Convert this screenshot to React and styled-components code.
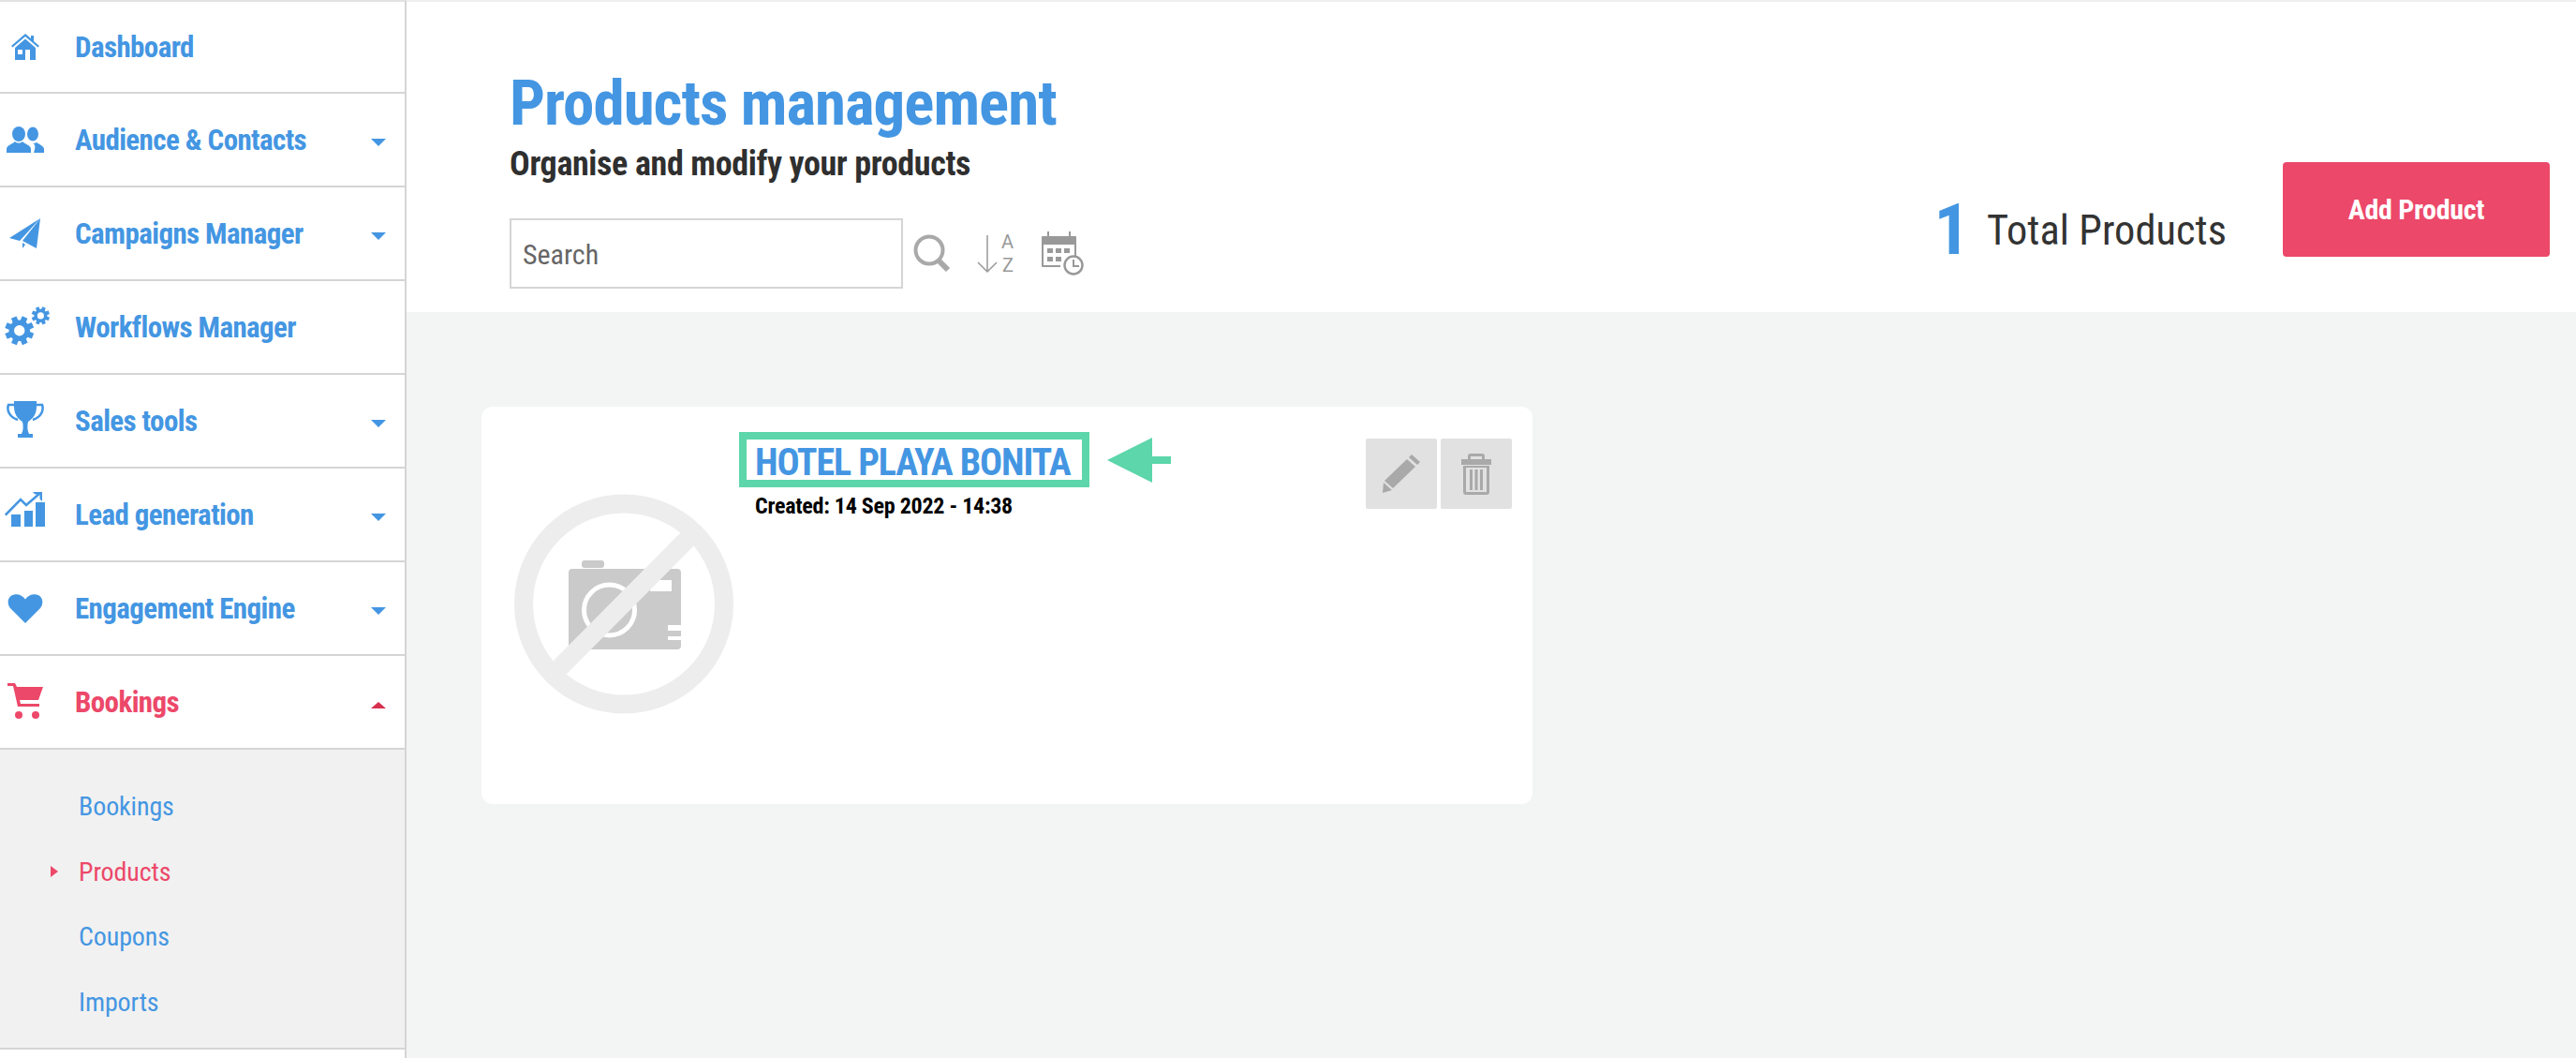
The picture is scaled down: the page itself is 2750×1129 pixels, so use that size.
import React from "react";
import styled, { createGlobalStyle } from "styled-components";

const BLUE = "#4496e2";
const RED = "#ec4869";
const GREEN = "#5cd6aa";

const GlobalStyle = createGlobalStyle`
  html, body {
    margin: 0;
    padding: 0;
    background: #f3f4f4;
  }
  body {
    font-family: "Roboto", "Liberation Sans", sans-serif;
    font-stretch: 75%;
  }
  * {
    box-sizing: border-box;
  }
`;

const Page = styled.div`
  display: flex;
  width: 2750px;
  height: 1129px;
  overflow: hidden;
`;

const Sidebar = styled.nav`
  width: 434px;
  flex-shrink: 0;
  background: #fff;
  border-right: 2px solid #d5d5d5;
  border-top: 2px solid #e2e2e2;
`;

const MenuRow = styled.div`
  display: flex;
  align-items: center;
  height: ${(p) => (p.$first ? "98px" : "100px")};
  border-bottom: 2px solid #d5d5d5;
  color: ${(p) => (p.$active ? RED : BLUE)};
`;

const IconSlot = styled.span`
  width: 80px;
  flex-shrink: 0;
  display: flex;
  justify-content: center;
  padding-right: 26px;
  margin-bottom: ${(p) => p.$lift || 0}px;
`;

const MenuLabel = styled.span`
  flex: 1;
  font-size: 31px;
  font-weight: 700;
  letter-spacing: -0.6px;
  white-space: nowrap;
`;

const Caret = styled.span`
  width: 0;
  height: 0;
  margin: 6px 20px 0 0;
  border-left: 8px solid transparent;
  border-right: 8px solid transparent;
  border-top: ${(p) => (p.$up ? "0" : `8px solid ${BLUE}`)};
  border-bottom: ${(p) => (p.$up ? "7px solid #d8304f" : "0")};
`;

const SubMenu = styled.div`
  height: 320px;
  padding: 26px 0 0 84px;
  background: #f1f1f1;
  border-bottom: 2px solid #d5d5d5;
`;

const SubItem = styled.div`
  position: relative;
  height: 69.5px;
  line-height: 69.5px;
  font-size: 28px;
  letter-spacing: -0.1px;
  color: ${(p) => (p.$active ? RED : BLUE)};

  ${(p) =>
    p.$active &&
    `&::before {
      content: "";
      position: absolute;
      left: -30px;
      top: 28px;
      border-left: 8px solid ${RED};
      border-top: 6px solid transparent;
      border-bottom: 6px solid transparent;
    }`}
`;

const Main = styled.main`
  flex: 1;
  display: flex;
  flex-direction: column;
`;

const Header = styled.header`
  height: 333px;
  background: #fff;
  border-top: 2px solid #eeeeee;
  display: flex;
  justify-content: space-between;
  padding: 0 28px 0 110px;
`;

const HeaderLeft = styled.div`
  padding-top: 68px;
`;

const Title = styled.h1`
  margin: 0;
  font-size: 67px;
  line-height: 80px;
  font-weight: 700;
  letter-spacing: -1px;
  color: ${BLUE};
  white-space: nowrap;
`;

const Subtitle = styled.h2`
  margin: 3px 0 0;
  font-size: 36px;
  line-height: 44px;
  font-weight: 700;
  letter-spacing: -0.35px;
  color: #2f2f2f;
  white-space: nowrap;
`;

const SearchRow = styled.div`
  display: flex;
  align-items: center;
  margin-top: 36px;
`;

const SearchBox = styled.div`
  width: 420px;
  height: 75px;
  display: flex;
  align-items: center;
  padding: 2px 0 0 12px;
  border: 2px solid #d5d5d5;
  font-size: 30px;
  color: #666;
`;

const ToolIcon = styled.span`
  display: flex;
  margin-left: ${(p) => p.$gap}px;
`;

const HeaderRight = styled.div`
  display: flex;
  align-items: flex-start;
  padding-top: 171px;
`;

const Totals = styled.div`
  display: flex;
  align-items: center;
  height: 101px;
  margin-right: 60px;
  padding-top: 44px;
`;

const TotalNumber = styled.span`
  font-size: 76px;
  font-weight: 700;
  color: ${BLUE};
  margin: -2px 18px 0 0;
`;

const TotalLabel = styled.span`
  font-size: 44.5px;
  color: #333;
  white-space: nowrap;
`;

const AddButton = styled.button`
  width: 285px;
  height: 101px;
  border: 0;
  border-radius: 4px;
  background: ${RED};
  color: #fff;
  font: inherit;
  font-size: 30px;
  font-weight: 700;
  letter-spacing: -0.3px;
`;

const Content = styled.section`
  padding: 101px 0 0 80px;
`;

const Card = styled.article`
  width: 1122px;
  height: 424px;
  border-radius: 12px;
  background: #fff;
  display: flex;
  padding: 27px 22px 0 35px;
`;

const Thumb = styled.div`
  width: 240px;
  flex-shrink: 0;
  padding-top: 66px;
`;

const CardBody = styled.div`
  flex: 1;
`;

const TitleRow = styled.div`
  display: flex;
  align-items: center;
`;

const Highlight = styled.div`
  width: 374px;
  height: 59px;
  border: 8px solid ${GREEN};
  padding-left: 9px;
  font-size: 40px;
  line-height: 50px;
  font-weight: 700;
  letter-spacing: -1.1px;
  color: ${BLUE};
  white-space: nowrap;
`;

const Created = styled.div`
  margin: 5px 0 0 17px;
  font-size: 24px;
  line-height: 30px;
  font-weight: 700;
  letter-spacing: -0.25px;
  color: #000;
`;

const Actions = styled.div`
  display: flex;
  gap: 4px;
  flex-shrink: 0;
  margin-top: 7px;
`;

const ActionButton = styled.span`
  width: 76px;
  height: 75px;
  display: flex;
  align-items: center;
  justify-content: center;
  background: #e1e1e1;
  border-radius: 2px;
`;

const SvgLetter = styled.text`
  font-family: "Roboto", sans-serif;
  font-stretch: 100%;
  font-size: 20px;
  fill: #999;
  stroke: none;
`;

const HomeIcon = () => (
  <svg width="30" height="28" viewBox="0 0 30 28" fill="currentColor">
    <path d="M15 0L21 5V2h3v6l6 5-1.500 1.600L15 3 1.500 14.600 0 13z" />
    <path fillRule="evenodd" d="M15 5.500L26 15v13h-6V17h-5v11H4V15zM7 17v5h5v-5z" />
  </svg>
);

const PeopleIcon = () => (
  <svg width="40" height="28" viewBox="0 0 40 28" fill="currentColor">
    <ellipse cx="13" cy="8" rx="7" ry="8" />
    <path d="M0 28v-4c0-4 6-5 9-8 2 2 6 2 8 0 3 3 9 4 9 8v4z" />
    <ellipse cx="28" cy="8" rx="6" ry="7.500" />
    <path d="M29 28h11v-4c0-3-5-5-8-7-2 1-3 1-4 .500 3 2 3 5 1 10.500z" />
  </svg>
);

const PlaneIcon = () => (
  <svg width="34" height="33" viewBox="0 0 34 33" fill="currentColor">
    <path d="M33 0L0 21l11 3z" />
    <path d="M33 0L14 24l15 8z" />
    <path d="M14 26v6l3-4z" />
  </svg>
);

const Gear = ({ cx, cy, r }) => (
  <g fill="currentColor">
    {[0, 45, 90, 135, 180, 225, 270, 315].map((a) => (
      <rect
        key={a}
        x={cx - r * 0.2}
        y={cy - r}
        width={r * 0.4}
        height={r * 0.5}
        transform={`rotate(${a + 22} ${cx} ${cy})`}
      />
    ))}
    <circle cx={cx} cy={cy} r={r * 0.55} fill="none" stroke="currentColor" strokeWidth={r * 0.36} />
  </g>
);

const GearsIcon = () => (
  <svg width="56" height="43" viewBox="-5 0 56 43">
    <Gear cx={16.5} cy={27} r={16} />
    <Gear cx={40} cy={10.5} r={10} />
  </svg>
);

const TrophyIcon = () => (
  <svg width="40" height="39" viewBox="0 0 40 39" fill="currentColor">
    <path d="M8 0h24v6c0 8-4 13-9 16-1 5-1 9 1 13h4v4H12v-4h4c2-4 2-8 1-13C12 19 8 14 8 6z" />
    <path d="M8 4H2C0 10 3 17 12 20" fill="none" stroke="currentColor" strokeWidth="2.500" />
    <path d="M32 4h6c2 6-1 13-10 16" fill="none" stroke="currentColor" strokeWidth="2.500" />
  </svg>
);

const ChartIcon = () => (
  <svg width="44" height="38" viewBox="0 0 44 38" fill="currentColor">
    <path d="M7 25h10v13H7zM21 21h9v17h-9zM33 12h10v26H33z" />
    <path d="M0.800 25.500L17 9l6 6L38 2" fill="none" stroke="currentColor" strokeWidth="2.500" />
    <path d="M30 1h10v10l-2.500-2.500V3.500H32.500z" />
  </svg>
);

const HeartIcon = () => (
  <svg width="38" height="31" viewBox="0 0 38 31" fill="currentColor">
    <path d="M19 31L3 15C-1 10 0 2 7 .500c5-1 9 1 12 5 3-4 7-6 12-5 7 1.500 8 9.500 4 14.500z" />
  </svg>
);

const CartIcon = () => (
  <svg width="38" height="38" viewBox="0 0 38 38" fill="currentColor">
    <path d="M0 0h8l2 4h28l-5 14H13l1 4h20v3H11L6 3H0z" />
    <circle cx="12" cy="34" r="4" />
    <circle cx="30" cy="34" r="4" />
  </svg>
);

const SearchIcon = () => (
  <svg width="40" height="41" viewBox="0 0 40 41" fill="none" stroke="#a9a9a9">
    <circle cx="17" cy="17" r="14.500" strokeWidth="4" />
    <path d="M27 28l10 10" strokeWidth="6" />
  </svg>
);

const SortIcon = () => (
  <svg width="42" height="42" viewBox="0 0 42 42" fill="none" stroke="#999" strokeWidth="1.500">
    <path d="M11 1v39M1 30l10 10 10-10" />
    <SvgLetter x="26" y="15">A</SvgLetter>
    <SvgLetter x="27" y="40">Z</SvgLetter>
  </svg>
);

const CalendarIcon = () => (
  <svg width="46" height="47" viewBox="0 0 46 47" fill="none">
    <path fill="#999" fillRule="evenodd" d="M2 5h35a1 1 0 011 1v21h-2V14H3v22h18v2H2a1 1 0 01-1-1V6a1 1 0 011-1z" />
    <path stroke="#999" strokeWidth="2" d="M8 0v9M31 0v9" />
    <path fill="#999" d="M7 18h6v5H7zM16 18h6v5h-6zM25 18h6v5h-6zM7 27h6v5H7zM16 27h6v5h-6z" />
    <circle cx="35" cy="36" r="9.500" fill="#fff" stroke="#999" strokeWidth="2.500" />
    <path stroke="#999" strokeWidth="2" d="M35 30v7h6" />
  </svg>
);

const PencilIcon = () => (
  <svg width="40" height="41" viewBox="0 0 40 41" fill="#a9a9a9">
    <path d="M31 0l9 8-3 3-9-8zM26 5l9 8L11 36 2 28z" />
    <path d="M1 30l9 8-10 3z" />
  </svg>
);

const TrashIcon = () => (
  <svg width="32" height="44" viewBox="0 0 32 44" fill="#a9a9a9">
    <path fillRule="evenodd" d="M10 0h12a3 3 0 013 3v3h7v6H0V6h7V3a3 3 0 013-3zm0 3v3h12V3z" />
    <path fillRule="evenodd" d="M2 13h28v28a3 3 0 01-3 3H5a3 3 0 01-3-3zm3 2v26h22V15z" />
    <path d="M9 17h3v22H9zM14.500 17h3v22h-3zM20 17h3v22h-3z" />
  </svg>
);

const NoPhoto = () => (
  <svg width="234" height="236" viewBox="0 0 234 236">
    <rect x="72" y="71" width="24" height="8" rx="3" fill="#cacaca" />
    <rect x="58" y="80" width="120" height="86" rx="4" fill="#cacaca" />
    <circle cx="101.500" cy="124" r="27" fill="none" stroke="#fff" strokeWidth="5" />
    <path fill="#fff" d="M145 92h23v12h-23zM164 140h14v6h-14zM164 152h14v4h-14z" />
    <circle cx="117" cy="117.500" r="107" fill="none" stroke="#ededed" strokeWidth="20" />
    <path stroke="#ededed" strokeWidth="20" d="M188 45L46 188" />
  </svg>
);

const GreenArrow = () => (
  <svg width="68" height="48" viewBox="0 0 68 48" fill={GREEN} style={{ marginLeft: 19 }}>
    <path d="M0 24L48 0v20h20v8H48v20z" />
  </svg>
);

const menu = [
  { label: "Dashboard", icon: <HomeIcon /> },
  { label: "Audience & Contacts", icon: <PeopleIcon />, caret: true },
  { label: "Campaigns Manager", icon: <PlaneIcon />, caret: true },
  { label: "Workflows Manager", icon: <GearsIcon />, lift: 4 },
  { label: "Sales tools", icon: <TrophyIcon />, caret: true, lift: 4 },
  { label: "Lead generation", icon: <ChartIcon />, caret: true, lift: 12 },
];

export default function App() {
  return (
    <Page>
      <GlobalStyle />
      <Sidebar>
        {menu.map((item, i) => (
          <MenuRow key={item.label} $first={i === 0}>
            <IconSlot $lift={item.lift}>{item.icon}</IconSlot>
            <MenuLabel>{item.label}</MenuLabel>
            {item.caret && <Caret />}
          </MenuRow>
        ))}
        <MenuRow>
          <IconSlot><HeartIcon /></IconSlot>
          <MenuLabel>Engagement Engine</MenuLabel>
          <Caret />
        </MenuRow>
        <MenuRow $active>
          <IconSlot $lift={2}><CartIcon /></IconSlot>
          <MenuLabel>Bookings</MenuLabel>
          <Caret $up />
        </MenuRow>
        <SubMenu>
          <SubItem>Bookings</SubItem>
          <SubItem $active>Products</SubItem>
          <SubItem>Coupons</SubItem>
          <SubItem>Imports</SubItem>
        </SubMenu>
      </Sidebar>
      <Main>
        <Header>
          <HeaderLeft>
            <Title>Products management</Title>
            <Subtitle>Organise and modify your products</Subtitle>
            <SearchRow>
              <SearchBox>Search</SearchBox>
              <ToolIcon $gap={11}><SearchIcon /></ToolIcon>
              <ToolIcon $gap={28}><SortIcon /></ToolIcon>
              <ToolIcon $gap={26}><CalendarIcon /></ToolIcon>
            </SearchRow>
          </HeaderLeft>
          <HeaderRight>
            <Totals>
              <TotalNumber>1</TotalNumber>
              <TotalLabel>Total Products</TotalLabel>
            </Totals>
            <AddButton>Add Product</AddButton>
          </HeaderRight>
        </Header>
        <Content>
          <Card>
            <Thumb><NoPhoto /></Thumb>
            <CardBody>
              <TitleRow>
                <Highlight>HOTEL PLAYA BONITA</Highlight>
                <GreenArrow />
              </TitleRow>
              <Created>Created: 14 Sep 2022 - 14:38</Created>
            </CardBody>
            <Actions>
              <ActionButton><PencilIcon /></ActionButton>
              <ActionButton><TrashIcon /></ActionButton>
            </Actions>
          </Card>
        </Content>
      </Main>
    </Page>
  );
}
